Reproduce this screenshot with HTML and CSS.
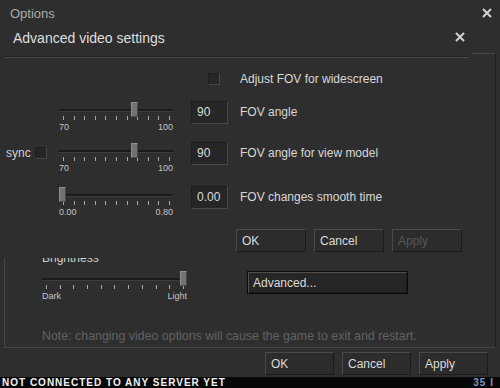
FILE: index.html
```html
<!DOCTYPE html>
<html lang="en">
<head>
  <meta charset="UTF-8" />
  <title>Options - Advanced video settings</title>
  <link rel="stylesheet" href="styles.css">
</head>
<body>
  <div class="screen">

    <div class="options">
      <div class="opt-title">
        <span>Options</span>
        <svg class="close close-main" viewBox="0 0 10 10"><path d="M1 1L9 9M9 1L1 9" /></svg>
      </div>

      <div class="opt-panel">
        <div class="bright-label">Brightness</div>
        <div class="bright-row">
          <div class="slider slider-wide">
            <div class="track"></div>
            <div class="thumb" style="left: 138px"></div>
            <div class="ticks">
              <i></i><i></i><i></i><i></i><i></i><i></i><i></i><i></i><i></i><i></i><i></i>
            </div>
            <div class="scale"><span>Dark</span><span>Light</span></div>
          </div>
          <button class="btn btn-default">Advanced...</button>
        </div>
        <p class="note">Note: changing video options will cause the game to exit and restart.</p>
      </div>

      <div class="opt-footer">
        <button class="btn">OK</button>
        <button class="btn">Cancel</button>
        <button class="btn">Apply</button>
      </div>
    </div>

    <div class="game-strip">
      <span class="hud-left">NOT CONNECTED TO ANY SERVER YET</span>
      <span class="hud-right">35 I</span>
    </div>

    <!-- dialog on top of the options window -->
    <div class="advanced">
      <div class="adv-title">
        <span>Advanced video settings</span>
        <svg class="close close-adv" viewBox="0 0 10 10"><path d="M1 1L9 9M9 1L1 9" /></svg>
      </div>
      <div class="separator"></div>

      <div class="adv-body">
        <div class="row row-check">
          <div class="lead"></div>
          <div class="spacer-slider"></div>
          <span class="checkbox check-wide"></span>
          <span class="check-label">Adjust FOV for widescreen</span>
        </div>

        <div class="row row-first">
          <div class="lead"></div>
          <div class="slider">
            <div class="track"></div>
            <div class="thumb" style="left: 72px"></div>
            <div class="ticks">
              <i></i><i></i><i></i><i></i><i></i><i></i><i></i><i></i><i></i><i></i><i></i>
            </div>
            <div class="scale"><span>70</span><span>100</span></div>
          </div>
          <div class="textbox">90</div>
          <span class="label">FOV angle</span>
        </div>

        <div class="row row-second">
          <div class="lead lead-sync">
            <span>sync</span>
            <span class="checkbox"></span>
          </div>
          <div class="slider">
            <div class="track"></div>
            <div class="thumb" style="left: 72px"></div>
            <div class="ticks">
              <i></i><i></i><i></i><i></i><i></i><i></i><i></i><i></i><i></i><i></i><i></i>
            </div>
            <div class="scale"><span>70</span><span>100</span></div>
          </div>
          <div class="textbox">90</div>
          <span class="label">FOV angle for view model</span>
        </div>

        <div class="row row-third">
          <div class="lead"></div>
          <div class="slider">
            <div class="track"></div>
            <div class="thumb" style="left: 0px"></div>
            <div class="ticks">
              <i></i><i></i><i></i><i></i><i></i><i></i><i></i><i></i><i></i><i></i><i></i>
            </div>
            <div class="scale"><span>0.00</span><span>0.80</span></div>
          </div>
          <div class="textbox">0.00</div>
          <span class="label">FOV changes smooth time</span>
        </div>

        <div class="adv-buttons">
          <button class="btn btn-wide">OK</button>
          <button class="btn btn-wide">Cancel</button>
          <button class="btn btn-wide" disabled>Apply</button>
        </div>
      </div>
    </div>

  </div>
</body>
</html>
```

FILE: styles.css
```css
* {
  box-sizing: border-box;
}

body {
  margin: 0;
  background: #2e2e2e;
  font-family: 'Liberation Sans', Arial, sans-serif;
  font-size: 12px;
  color: #d8d8d8;
}

.screen {
  position: relative;
  width: 500px;
  height: 388px;
  overflow: hidden;
}

/* ---------- Options window ---------- */

.options {
  width: 500px;
  height: 377px;
  background: #2e2e2e;
  display: flex;
  flex-direction: column;
}

.opt-title {
  height: 53px;
  display: flex;
  justify-content: space-between;
  align-items: flex-start;
  padding: 6px 8px 0 10px;
  font-size: 13px;
  line-height: 16px;
  color: #ababab;
}

.close {
  width: 10px;
  height: 10px;
  stroke: #d4d4d4;
  stroke-width: 2;
  fill: none;
}

.close-main {
  margin-top: 2px;
}

.opt-panel {
  width: 492px;
  height: 295px;
  margin-left: 4px;
  border: 1px solid #474747;
  border-right-color: #1c1c1c;
  display: flex;
  flex-direction: column;
  justify-content: flex-end;
  padding: 0 0 4px 37px;
}

.bright-label {
  line-height: 14px;
  color: #d0d0d0;
}

.bright-row {
  display: flex;
  align-items: flex-start;
  margin-top: 6px;
}

.note {
  margin: 28px 0 0;
  line-height: 14px;
  color: #626262;
  font-size: 12.4px;
}

.opt-footer {
  flex: 1;
  display: flex;
  justify-content: flex-end;
  gap: 8px;
  padding: 4px 12px 0 0;
}

/* ---------- buttons & inputs ---------- */

.btn {
  width: 69px;
  height: 23px;
  padding: 0 0 0 5px;
  text-align: left;
  font-family: inherit;
  font-size: 12px;
  color: #dadada;
  background: #2c2c2c;
  border: 1px solid #1b1b1b;
  border-top-color: #4a4a4a;
  border-left-color: #4a4a4a;
}

.btn:disabled {
  color: #585858;
}

.btn-wide {
  width: 70px;
}

.btn-default {
  width: 161px;
  margin-left: 60px;
  background: #262626;
  border: 1px solid #0a0a0a;
  box-shadow: inset 1px 1px 0 #4e4e4e, inset -1px -1px 0 #1a1a1a;
}

.textbox {
  width: 37px;
  height: 23px;
  padding-left: 5px;
  line-height: 21px;
  background: #262626;
  border: 1px solid #484848;
  border-top-color: #1c1c1c;
  border-left-color: #1c1c1c;
  color: #dcdcdc;
}

.checkbox {
  display: block;
  width: 12px;
  height: 12px;
  background: #262626;
  border: 1px solid #474747;
  border-top-color: #1e1e1e;
  border-left-color: #1e1e1e;
}

/* ---------- sliders ---------- */

.slider {
  position: relative;
  width: 114px;
  padding-top: 7px;
  margin-top: 1px;
}

.slider-wide {
  width: 145px;
  margin-top: 0;
}

.track {
  height: 3px;
  background: #1b1b1b;
  border-bottom: 1px solid #3c3c3c;
}

.thumb {
  position: absolute;
  top: 0;
  width: 7px;
  height: 15px;
  background: #727272;
  border: 1px solid #4a4a4a;
  border-top-color: #8e8e8e;
  border-left-color: #8e8e8e;
}

.ticks {
  display: flex;
  justify-content: space-between;
  height: 4px;
  margin-top: 4px;
  padding: 0 3px 0 4px;
}

.ticks i {
  width: 1px;
  height: 4px;
  background: #a8a8a8;
}

.scale {
  display: flex;
  justify-content: space-between;
  margin-top: 3px;
  font-size: 9px;
  line-height: 9px;
  color: #c4c4c4;
}

/* ---------- Advanced video settings dialog ---------- */

.advanced {
  position: absolute;
  left: 0;
  top: 27px;
  width: 472px;
  height: 231px;
  background: #2e2e2e;
}

.adv-title {
  height: 29px;
  display: flex;
  justify-content: space-between;
  align-items: flex-start;
  padding: 3px 7px 0 13px;
  font-size: 14px;
  line-height: 16px;
  color: #dedede;
}

.close-adv {
  margin-top: 2px;
}

.separator {
  height: 2px;
  margin: 0 3px 0 5px;
  border-top: 1px solid #242424;
  border-bottom: 1px solid #474747;
}

.adv-body {
  padding-top: 15px;
}

.row {
  display: flex;
  align-items: flex-start;
}

.row-check {
  height: 12px;
  align-items: center;
}

.row-first {
  margin-top: 16px;
  height: 30px;
}

.row-second {
  margin-top: 11px;
  height: 30px;
}

.row-third {
  margin-top: 14px;
  height: 30px;
}

.lead {
  width: 59px;
  flex-shrink: 0;
}

.lead-sync {
  display: flex;
  align-items: center;
  gap: 4px;
  height: 17px;
  margin-top: 2px;
  padding-left: 6px;
  color: #d0d0d0;
}

.spacer-slider {
  width: 114px;
}

.check-wide {
  margin-left: 35px;
}

.check-label {
  margin-left: 20px;
  line-height: 12px;
  color: #d8d8d8;
}

.slider + .textbox {
  margin-left: 18px;
}

.label {
  margin-left: 12px;
  line-height: 23px;
  color: #d8d8d8;
}

.adv-buttons {
  display: flex;
  gap: 8px;
  margin-top: 13px;
  padding-left: 236px;
}

/* ---------- game behind the menu ---------- */

.game-strip {
  height: 11px;
  background: #070707;
  display: flex;
  justify-content: space-between;
  align-items: flex-start;
  font-weight: bold;
  font-size: 10px;
  line-height: 10px;
  letter-spacing: 1px;
}

.hud-left {
  margin: 1px 0 0 2px;
  color: #f2f2f2;
}

.hud-right {
  margin: 1px 6px 0 0;
  color: #7d96bf;
}
```
